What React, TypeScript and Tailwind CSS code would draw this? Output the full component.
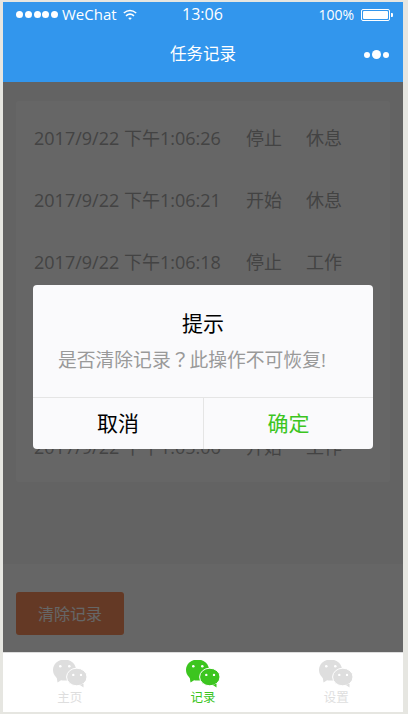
import React from "react";

const records = [
  { time: "2017/9/22 下午1:06:26", action: "停止", kind: "休息" },
  { time: "2017/9/22 下午1:06:21", action: "开始", kind: "休息" },
  { time: "2017/9/22 下午1:06:18", action: "停止", kind: "工作" },
  { time: "2017/9/22 下午1:06:11", action: "开始", kind: "工作" },
  { time: "2017/9/22 下午1:05:59", action: "停止", kind: "工作" },
  { time: "2017/9/22 下午1:05:06", action: "开始", kind: "工作" },
];

const font = "font-['Open_Sans','Noto_Sans_CJK_SC',sans-serif]";

function WeChatIcon({ color }: { color: string }) {
  return (
    <svg width="34" height="28" viewBox="0 0 34 28">
      <ellipse cx="11.5" cy="10" rx="11.5" ry="10.5" fill={color} />
      <path d="M3.5 16 L4.5 22.5 L10 19 Z" fill={color} />
      <circle cx="7.3" cy="6.3" r="1.3" fill="#fff" />
      <circle cx="16.3" cy="6.3" r="1.3" fill="#fff" />
      <ellipse cx="23.8" cy="17" rx="10.2" ry="8.8" fill={color} stroke="#fff" strokeWidth="1" />
      <path d="M27 25 L30.5 27.5 L30.5 23.5 Z" fill={color} />
      <circle cx="20.3" cy="14.9" r="1.2" fill="#fff" />
      <circle cx="28" cy="14.9" r="1.2" fill="#fff" />
    </svg>
  );
}

function Tab({ label, active }: { label: string; active?: boolean }) {
  return (
    <div className="flex-1 flex flex-col items-center pt-[7px]">
      <WeChatIcon color={active ? "#3cc51f" : "#dedede"} />
      <span className={`text-[12.5px] leading-[16px] mt-[2px] ${active ? "text-[#3cc51f]" : "text-[#dedede]"}`}>{label}</span>
    </div>
  );
}

export default function App() {
  return (
    <div className={`w-[408px] h-[714px] bg-[#e6e6e1] pt-[2px] px-[3px] ${font}`}>
      <div className="relative w-[400px] h-[710px] bg-white flex flex-col overflow-hidden">
        <div className="bg-[#3296ed] text-white h-[80px] shrink-0">
          <div className="h-[25px] flex items-center justify-between pl-[13px] pr-[10px] text-[14px]">
            <div className="flex items-center gap-[4px]">
              <div className="flex gap-[1.75px]">
                {[0, 1, 2, 3, 4].map((i) => (
                  <span key={i} className="w-[7px] h-[7px] rounded-full bg-white" />
                ))}
              </div>
              <span className="text-[15px]">WeChat</span>
              <svg width="14" height="12" viewBox="0 0 14 12" fill="none" stroke="#fff" strokeWidth="1.6" className="ml-[2px]">
                <path d="M0.8 4 Q7 -1 13.2 4" />
                <path d="M3 6.8 Q7 3.4 11 6.8" />
                <path d="M5.2 9 L7 11 L8.8 9 Q7 8 5.2 9 Z" fill="#fff" stroke="none" />
              </svg>
            </div>
            <span className="absolute left-[179px] top-[0px] text-[16px]">13:06</span>
            <div className="flex items-center gap-[7px]">
              <span>100%</span>
              <div className="flex items-center">
                <div className="w-[29px] h-[12px] border border-white rounded-[2px] p-[1px]">
                  <div className="w-full h-full bg-white rounded-[1px]" />
                </div>
                <div className="w-[2px] h-[4px] bg-white rounded-r-[1px] ml-[1px]" />
              </div>
            </div>
          </div>
          <div className="relative h-[55px] flex items-center justify-center text-[16.5px]">
            任务记录
            <div className="absolute right-[14px] top-[23px] flex items-center gap-[2px]">
              <span className="w-[6px] h-[6px] rounded-full bg-white" />
              <span className="w-[9px] h-[9px] rounded-full bg-white" />
              <span className="w-[6px] h-[6px] rounded-full bg-white" />
            </div>
          </div>
        </div>

        <div className="flex-1 flex flex-col">
          <div className="bg-[#f8f8f8] h-[482px] px-[13px] pt-[19px]">
            <div className="bg-white h-[381px] rounded-[3px] pl-[18px] pt-[7px] text-[#a8a8a8] text-[18px]">
              {records.map((r) => (
                <div key={r.time} className="h-[61.8px] flex items-center">
                  <span className="w-[212px]">{r.time}</span>
                  <span className="w-[60px]">{r.action}</span>
                  <span>{r.kind}</span>
                </div>
              ))}
            </div>
          </div>
          <div className="flex-1 bg-white px-[13px] pt-[28px]">
            <button className="block w-[108px] h-[43px] rounded-[3px] bg-[#fb905c] text-white text-[16px]">清除记录</button>
          </div>
        </div>

        <div className="h-[60px] shrink-0 bg-white border-t border-[#dddddd] flex z-10">
          <Tab label="主页" />
          <Tab label="记录" active />
          <Tab label="设置" />
        </div>

        <div className="absolute left-0 right-0 top-[80px] h-[570px] bg-black/60" />

        <div className="absolute left-[30px] top-[283px] w-[340px] h-[164px] rounded-[4px] bg-[#fafafc] flex flex-col">
          <div className="text-center text-black text-[21px] leading-[28px] pt-[24px]">提示</div>
          <div className="px-[25px] pt-[9px] text-[#999] text-[18.8px] leading-[26px] flex-1 whitespace-nowrap">
            是否清除记录<span className="font-['Noto_Sans_CJK_TC']">？</span>此操作不可恢复!
          </div>
          <div className="h-[52px] border-t border-[#e5e5e5] flex text-[21px]">
            <div className="w-[171px] border-r border-[#e5e5e5] flex items-center justify-center text-black">取消</div>
            <div className="flex-1 flex items-center justify-center text-[#3cc51f]">确定</div>
          </div>
        </div>
      </div>
    </div>
  );
}
